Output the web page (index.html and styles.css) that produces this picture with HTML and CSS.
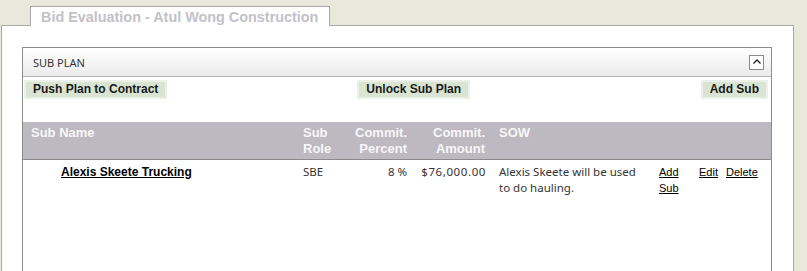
FILE: index.html
```html
<!DOCTYPE html>
<html lang="en">
<head>
    <meta charset="UTF-8">
    <title>Bid Evaluation</title>
    <link rel="stylesheet" href="styles.css">
</head>
<body>
    <div class="page">
        <div class="tabs">
            <div class="tab">Bid Evaluation - Atul Wong Construction</div>
        </div>
        <div class="panel">
            <div class="box">
                <div class="box-head">
                    <span class="box-title">SUB PLAN</span>
                    <span class="collapse">
                        <svg width="12" height="12" viewBox="0 0 12 12"><polyline points="2.5,7.5 6,4 9.5,7.5" fill="none" stroke="#222" stroke-width="1.3"/></svg>
                    </span>
                </div>
                <div class="actions">
                    <span class="btn">Push Plan to Contract</span>
                    <span class="btn btn-mid">Unlock Sub Plan</span>
                    <span class="btn btn-right">Add Sub</span>
                </div>
                <table class="subs">
                    <colgroup>
                        <col style="width:272px">
                        <col style="width:50px">
                        <col style="width:68px">
                        <col style="width:78px">
                        <col style="width:160px">
                        <col style="width:40px">
                        <col style="width:80px">
                    </colgroup>
                    <tr>
                        <th>Sub Name</th>
                        <th>Sub Role</th>
                        <th class="num">Commit. Percent</th>
                        <th class="num">Commit. Amount</th>
                        <th>SOW</th>
                        <th></th>
                        <th></th>
                    </tr>
                    <tr>
                        <td class="name"><a href="#">Alexis Skeete Trucking</a></td>
                        <td>SBE</td>
                        <td class="num">8 %</td>
                        <td class="num amount">$76,000.00</td>
                        <td class="sow">Alexis Skeete will be used to do hauling.</td>
                        <td class="link"><a href="#">Add Sub</a></td>
                        <td class="link"><a href="#" class="edit">Edit</a><a href="#">Delete</a></td>
                    </tr>
                </table>
            </div>
        </div>
    </div>
</body>
</html>
```

FILE: styles.css
```css
body{
    margin: 0;
    background: #e8e8dc;
    font-family: "Noto Sans", Arial, sans-serif;
}
.page{
    padding-top: 6px;
    padding-left: 1px;
}
.tabs{
    padding-left: 29px;
}
.tab{
    position: relative;
    z-index: 1;
    width: 298px;
    margin-bottom: -1px;
    padding: 2px 0 1px 0;
    text-indent: 10px;
    border: 1px solid #aaaaaa;
    border-bottom: none;
    background: #fff;
    color: #c2c1c9;
    font-family: "Liberation Sans", Arial, sans-serif;
    font-weight: bold;
    font-size: 14.4px;
    line-height: 16px;
}
.panel{
    width: 750px;
    height: 300px;
    padding: 21px 21px 0 20px;
    background: #fff;
    border: 1px solid #aaaaaa;
}
.box{
    height: 280px;
    border: 1px solid #8c8c8c;
}
.box-head{
    display: flex;
    align-items: center;
    justify-content: space-between;
    height: 28px;
    padding: 0 7px 0 10px;
    background: linear-gradient(#ffffff, #ebebeb);
    border-bottom: 1px solid #b4b4b4;
}
.box-title{
    font-size: 11px;
    color: #333;
}
.collapse{
    display: flex;
    align-items: center;
    justify-content: center;
    width: 13px;
    height: 13px;
    border: 1px solid #8a8a8a;
    background: #fff;
}
.actions{
    display: flex;
    align-items: flex-start;
    padding: 3px 3px 0 1px;
}
.btn{
    padding: 0 7px;
    border: 2px solid #ebf0e8;
    background: #d9e5d2;
    color: #1a1a1a;
    font-family: "Liberation Sans", Arial, sans-serif;
    font-weight: bold;
    font-size: 12px;
    line-height: 15px;
}
.btn-mid{
    margin-left: 190px;
}
.btn-right{
    margin-left: auto;
}
.subs{
    margin-top: 23px;
    width: 748px;
    table-layout: fixed;
    border-collapse: collapse;
}
.subs th{
    padding: 3px 6px 2px 8px;
    background: #bdb9c1;
    border-bottom: 1px solid #8a8a8a;
    color: #f7f7f7;
    text-align: left;
    vertical-align: top;
    font-family: "Liberation Sans", Arial, sans-serif;
    font-size: 13px;
    line-height: 16px;
}
.subs td{
    padding: 4px 6px 0 8px;
    vertical-align: top;
    color: #333;
    font-size: 11.5px;
    line-height: 16px;
}
.subs .num{
    text-align: right;
}
.subs td.amount{
    letter-spacing: 0.6px;
    padding-right: 5px;
}
.subs td.name{
    padding-left: 38px;
}
.name a{
    color: #000;
    font-family: "Liberation Sans", Arial, sans-serif;
    font-weight: bold;
    font-size: 12px;
}
.subs td.sow{
    padding-right: 12px;
}
.subs td.link{
    padding-right: 4px;
}
.link a{
    color: #000;
    font-family: "Liberation Sans", Arial, sans-serif;
    font-size: 11px;
}
.link .edit{
    margin-right: 8px;
}
```
